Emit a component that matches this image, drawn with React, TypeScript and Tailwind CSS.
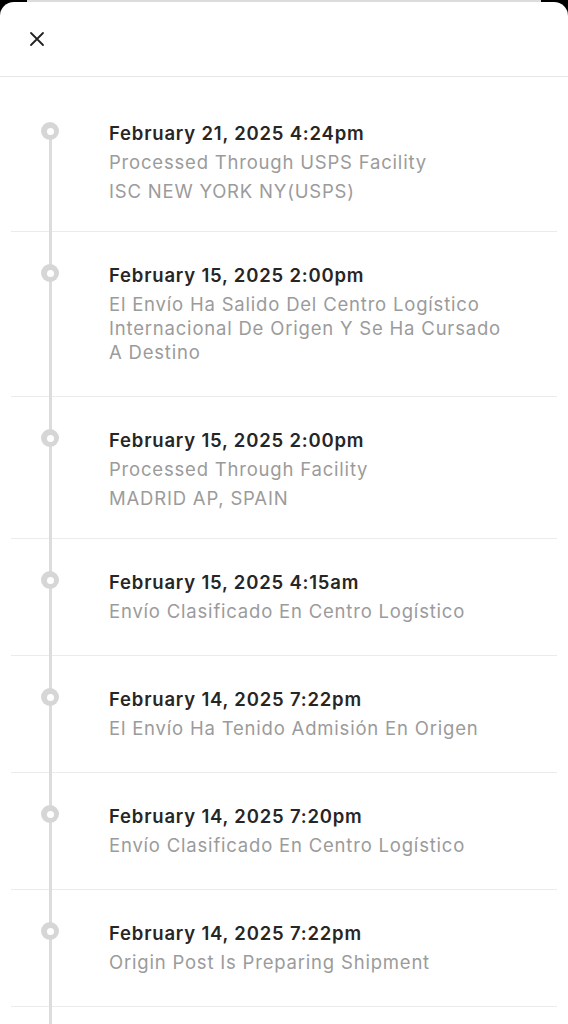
import React from "react";

type TrackingEvent = {
  date: string;
  description: string;
  location?: string;
};

const events: TrackingEvent[] = [
  {
    date: "February 21, 2025 4:24pm",
    description: "Processed Through USPS Facility",
    location: "ISC NEW YORK NY(USPS)",
  },
  {
    date: "February 15, 2025 2:00pm",
    description:
      "El Envío Ha Salido Del Centro Logístico Internacional De Origen Y Se Ha Cursado A Destino",
  },
  {
    date: "February 15, 2025 2:00pm",
    description: "Processed Through Facility",
    location: "MADRID AP, SPAIN",
  },
  { date: "February 15, 2025 4:15am", description: "Envío Clasificado En Centro Logístico" },
  { date: "February 14, 2025 7:22pm", description: "El Envío Ha Tenido Admisión En Origen" },
  { date: "February 14, 2025 7:20pm", description: "Envío Clasificado En Centro Logístico" },
  { date: "February 14, 2025 7:22pm", description: "Origin Post Is Preparing Shipment" },
];

export default function App() {
  return (
    <div className="h-[1024px] overflow-hidden bg-black font-['Inter',sans-serif]">
      {/* sheet stacked behind */}
      <div className="mx-[27px] h-[3px] bg-[#dcdcdc]" />

      <div className="-mt-[1px] flex h-[1022px] flex-col overflow-hidden rounded-t-[14px] bg-white">
        {/* Header */}
        <div className="flex h-[75px] shrink-0 items-center border-b border-[#e6e6e6] pl-[29px]">
          <button className="flex h-4 w-4 items-center justify-center text-[#222]" aria-label="Close">
            <svg width="16" height="16" viewBox="0 0 16 16" fill="none">
              <path d="M2 2l12 12M14 2L2 14" stroke="currentColor" strokeWidth="1.8" strokeLinecap="round" />
            </svg>
          </button>
        </div>

        {/* Timeline */}
        <div className="relative flex-1 px-[11px] pt-[13px]">
          <div className="absolute left-[49px] top-[54px] bottom-0 w-[3px] bg-[#dcdcdc]" />
          {events.map((ev, i) => (
            <div
              key={i}
              className={`flex border-b border-[#ebebeb] pt-[31px] ${ev.location ? "pb-[28px]" : "pb-[32px]"}`}
            >
              <div className="relative w-[98px] shrink-0">
                <div className="absolute left-[30px] top-[1px] flex h-[18px] w-[18px] items-center justify-center rounded-full bg-[#d6d6d6]">
                  <div className="h-[7px] w-[7px] rounded-full bg-white" />
                </div>
              </div>
              <div className="flex w-[410px] flex-col gap-[5px] text-[18.5px] leading-[24px] tracking-[0.8px]">
                <div className="font-semibold text-[#262626]">{ev.date}</div>
                <div className="text-[#9b9b9b]">{ev.description}</div>
                {ev.location && <div className="text-[#9b9b9b]">{ev.location}</div>}
              </div>
            </div>
          ))}
        </div>
      </div>
    </div>
  );
}
